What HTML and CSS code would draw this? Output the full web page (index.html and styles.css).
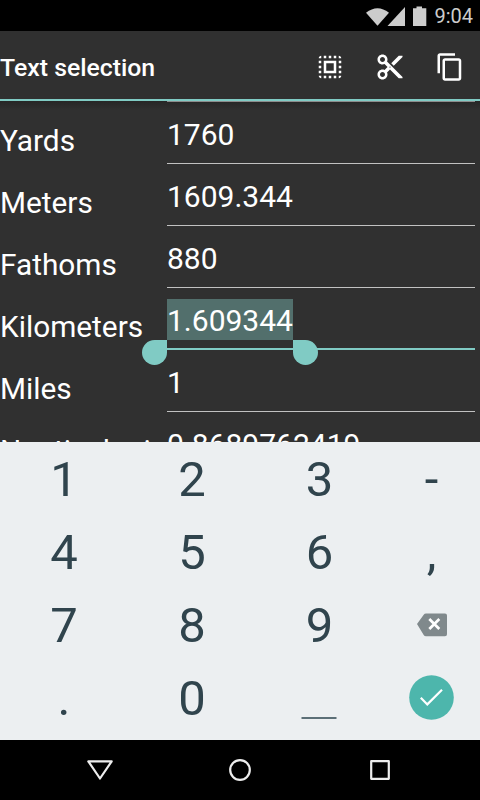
FILE: index.html
```
<!DOCTYPE html>
<html lang="en">
  <head>
    <meta charset="utf-8">
    <meta name="viewport" content="width=device-width,initial-scale=1">
    <title>Unit converter</title>
    <link rel="stylesheet" href="styles.css">
  </head>
  <body>
    <div class="status-bar">
      <svg class="status-icons" width="62" height="24" viewBox="0 0 62 24">
        <path d="M0 8.8Q11.5-.2 23 8.8L11.5 21.8z"/>
        <path d="M39 3v19H21.500z"/>
        <path d="M47 4.200h3.500V2.500h5.500v1.700h4.300v17.800H47z"/>
      </svg>
      <span class="clock">9:04</span>
    </div>

    <header class="action-bar">
      <h1 class="title">Text selection</h1>
      <div class="actions">
        <svg class="action" viewBox="0 0 24 24">
          <path d="M3 5h2V3c-1.100 0-2 .9-2 2zm0 8h2v-2H3v2zm4 8h2v-2H7v2zM3 9h2V7H3v2zm10-6h-2v2h2V3zm6 0v2h2c0-1.100-.9-2-2-2zM5 21v-2H3c0 1.100.9 2 2 2zm-2-4h2v-2H3v2zM9 3H7v2h2V3zm2 18h2v-2h-2v2zm8-8h2v-2h-2v2zm0 8c1.100 0 2-.9 2-2h-2v2zm0-12h2V7h-2v2zm0 8h2v-2h-2v2zm-4 4h2v-2h-2v2zm0-16h2V3h-2v2zM7 17h10V7H7v10zm2-8h6v6H9V9z"/>
        </svg>
        <svg class="action" viewBox="0 0 24 24">
          <path d="M9.640 7.640c.23-.5.360-1.050.36-1.640 0-2.210-1.790-4-4-4S2 3.790 2 6s1.790 4 4 4c.59 0 1.140-.13 1.640-.36L10 12l-2.360 2.360C7.140 14.130 6.590 14 6 14c-2.210 0-4 1.790-4 4s1.790 4 4 4 4-1.790 4-4c0-.59-.13-1.140-.36-1.640L12 14l7 7h3v-1L9.640 7.640zM6 8c-1.100 0-2-.89-2-2s.9-2 2-2 2 .89 2 2-.9 2-2 2zm0 12c-1.100 0-2-.89-2-2s.9-2 2-2 2 .89 2 2-.9 2-2 2zm6-7.500c-.28 0-.5-.22-.5-.5s.22-.5.5-.5.5.22.5.5-.22.5-.5.5zM19 3l-6 6 2 2 7-7V3h-3z"/>
        </svg>
        <svg class="action" viewBox="0 0 24 24">
          <path d="M16 1H4c-1.100 0-2 .9-2 2v14h2V3h12V1zm3 4H8c-1.100 0-2 .9-2 2v14c0 1.100.9 2 2 2h11c1.100 0 2-.9 2-2V7c0-1.100-.9-2-2-2zm0 16H8V7h11v14z"/>
        </svg>
      </div>
    </header>

    <main class="units">
      <div class="unit"><span class="label">Yards</span><span class="value">1760</span></div>
      <div class="unit"><span class="label">Meters</span><span class="value">1609.344</span></div>
      <div class="unit"><span class="label">Fathoms</span><span class="value">880</span></div>
      <div class="unit unit-focused">
        <span class="label">Kilometers</span>
        <span class="value"><span class="selection">1.609344<i class="handle handle-start"></i><i class="handle handle-end"></i></span></span>
      </div>
      <div class="unit"><span class="label">Miles</span><span class="value">1</span></div>
      <div class="unit"><span class="label">Nautical mi</span><span class="value">0.8689762419</span></div>
    </main>

    <div class="keyboard">
      <span class="key">1</span>
      <span class="key">2</span>
      <span class="key">3</span>
      <span class="key">-</span>
      <span class="key">4</span>
      <span class="key">5</span>
      <span class="key">6</span>
      <span class="key">,</span>
      <span class="key">7</span>
      <span class="key">8</span>
      <span class="key">9</span>
      <span class="key key-icon">
        <svg width="30" height="24" viewBox="0 0 30 24">
          <path fill="#80898c" d="M9 .5h19q2 0 2 2v18.800q0 2-2 2H9q-1.500 0-2.300-1.200L0 11 6.700 1.700Q7.500.5 9 .5z"/>
          <path class="stroke" stroke-width="2.700" d="M12.300 6l10 10m0-10l-10 10"/>
        </svg>
      </span>
      <span class="key">.</span>
      <span class="key">0</span>
      <span class="key key-space">
        <svg width="36" height="4" viewBox="0 0 36 4">
          <path stroke="#5c6f77" stroke-width="2" d="M.5 2h35"/>
        </svg>
      </span>
      <span class="key key-icon">
        <svg width="45" height="45" viewBox="0 0 45 45">
          <circle cx="22.500" cy="22.500" r="22.300" fill="#4db6ac"/>
          <path class="stroke" stroke-width="2.200" d="M11.800 22.800l6.500 6.600L33 14.800"/>
        </svg>
      </span>
    </div>

    <nav class="nav-bar">
      <svg class="nav-icon" viewBox="0 0 28 28"><path d="M2.300 5.300h23.400L14 22.500z"/></svg>
      <svg class="nav-icon" viewBox="0 0 28 28"><circle cx="14" cy="14" r="9.800"/></svg>
      <svg class="nav-icon" viewBox="0 0 28 28"><path d="M5.200 5.200h17.600v17.600H5.200z"/></svg>
    </nav>
  </body>
</html>
```
FILE: styles.css
```
* {
  box-sizing: border-box;
  margin: 0;
  padding: 0;
}

body {
  background-color: #000;
  color: #fff;
  display: flex;
  flex-direction: column;
  font-family: Roboto, sans-serif;
  height: 800px;
  overflow: hidden;
  width: 480px;
}

svg {
  display: block;
}

.status-bar {
  align-items: center;
  color: #ccc;
  display: flex;
  flex: none;
  gap: 6px;
  height: 31px;
  justify-content: flex-end;
  padding-right: 7px;
}

.status-icons {
  fill: #ccc;
}

.clock {
  font-size: 20px;
  font-weight: 400;
}

.action-bar {
  align-items: center;
  background-color: #303030;
  border-bottom: 2px solid #80cbc4;
  display: flex;
  flex: none;
  height: 70px;
  justify-content: space-between;
  padding: 3px 15px 0 0;
}

.title {
  font-size: 24.8px;
  font-weight: 500;
  padding-top: 2px;
}

.actions {
  display: flex;
  gap: 30px;
}

.action {
  fill: #fff;
  height: 30px;
  width: 30px;
}

.units {
  background: linear-gradient(#262626, #303030 9px);
  flex: none;
  height: 341px;
  overflow: hidden;
}

/* underline of the row scrolled under the action bar */
.units::before {
  background-color: #8c8c8c;
  content: '';
  display: block;
  height: 1px;
  margin-left: 167px;
  width: 308px;
}

.unit {
  display: grid;
  font-size: 30px;
  grid-template-columns: 167px 308px;
  height: 62px;
  line-height: 35px;
}

.label {
  font-size: 29.8px;
  overflow: hidden;
  padding-top: 21px;
  white-space: nowrap;
}

.value {
  border-bottom: 1px solid #c1c1c1;
  padding-top: 15px;
}

.unit-focused .value {
  border-bottom: 2px solid #80cbc4;
}

.selection {
  background-color: #526f6c;
  padding: 4px 0 2px;
  position: relative;
}

/* teardrop handles hang from the bottom corners of the selection */
.handle {
  background-color: #80cbc4;
  height: 25px;
  position: absolute;
  top: 100%;
  width: 25px;
}

.handle-start {
  border-radius: 50% 0 50% 50%;
  right: 100%;
}

.handle-end {
  border-radius: 0 50% 50% 50%;
  left: 100%;
}

.keyboard {
  background-color: #eceff1;
  color: #30444d;
  display: grid;
  flex: none;
  font-size: 49px;
  grid-template-columns: 128px 128px 127px 97px;
  grid-template-rows: repeat(4, 73px);
  height: 298px;
  line-height: 73px;
  padding-top: 1px;
}

.key {
  align-items: center;
  display: flex;
  justify-content: center;
}

.key-icon {
  padding-bottom: 2px;
}

.key-space {
  align-items: flex-end;
  padding: 0 2px 15px 0;
}

.stroke {
  fill: none;
  stroke: #fff;
}

.nav-bar {
  align-items: center;
  display: flex;
  flex: 1;
  gap: 112px;
  justify-content: center;
}

.nav-icon {
  fill: none;
  height: 28px;
  stroke: #eee;
  stroke-linejoin: round;
  stroke-width: 2.2;
  width: 28px;
}
```
